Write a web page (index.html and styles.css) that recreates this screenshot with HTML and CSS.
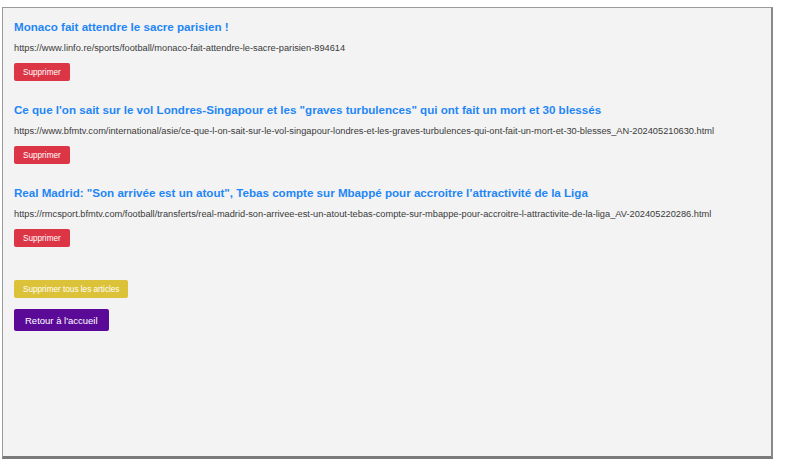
FILE: index.html
```html
<!DOCTYPE html>
<html lang="fr">
<head>
<meta charset="utf-8">
<title>Articles</title>
<link rel="stylesheet" href="styles.css">
</head>
<body>
<div class="frame">
  <div class="article">
    <h2 class="title">Monaco fait attendre le sacre parisien !</h2>
    <p class="url">https://www.linfo.re/sports/football/monaco-fait-attendre-le-sacre-parisien-894614</p>
    <button class="btn btn-red">Supprimer</button>
  </div>
  <div class="article">
    <h2 class="title">Ce que l'on sait sur le vol Londres-Singapour et les "graves turbulences" qui ont fait un mort et 30 blessés</h2>
    <p class="url">https://www.bfmtv.com/international/asie/ce-que-l-on-sait-sur-le-vol-singapour-londres-et-les-graves-turbulences-qui-ont-fait-un-mort-et-30-blesses_AN-202405210630.html</p>
    <button class="btn btn-red">Supprimer</button>
  </div>
  <div class="article">
    <h2 class="title">Real Madrid: "Son arrivée est un atout", Tebas compte sur Mbappé pour accroitre l’attractivité de la Liga</h2>
    <p class="url">https://rmcsport.bfmtv.com/football/transferts/real-madrid-son-arrivee-est-un-atout-tebas-compte-sur-mbappe-pour-accroitre-l-attractivite-de-la-liga_AV-202405220286.html</p>
    <button class="btn btn-red">Supprimer</button>
  </div>
  <div class="actions">
    <button class="btn btn-yellow">Supprimer tous les articles</button>
    <button class="btn btn-purple">Retour à l'accueil</button>
  </div>
</div>
</body>
</html>
```
FILE: styles.css
```css
html, body {
  margin: 0;
  padding: 0;
  background: #ffffff;
}
body {
  font-family: "Liberation Sans", Arial, sans-serif;
  padding: 7px 0 0 2px;
}
.frame {
  box-sizing: border-box;
  width: 771px;
  height: 452px;
  background: #f3f3f3;
  border: 1px solid #9a9a9a;
  border-right: 2px solid #8a8a8a;
  border-bottom: 3px solid #7a7a7a;
  padding: 11px 11px 0 11px;
  display: flex;
  flex-direction: column;
  align-items: flex-start;
}
.article {
  display: flex;
  flex-direction: column;
  align-items: flex-start;
  margin-bottom: 21px;
}
.title {
  margin: 0 0 7px 0;
  font-size: 11.6px;
  line-height: 16px;
  font-weight: bold;
  color: #1f86f6;
}
.url {
  margin: 0 0 9px 0;
  font-size: 9.25px;
  line-height: 12px;
  color: #3a3a3a;
}
.btn {
  border: none;
  border-radius: 2px;
  color: #ffffff;
  font-family: "Liberation Sans", Arial, sans-serif;
  cursor: pointer;
}
.btn-red {
  background: #dc3545;
  height: 18px;
  font-size: 8.2px;
  padding: 0 9px;
}
.actions {
  margin-top: 12px;
  display: flex;
  flex-direction: column;
  align-items: flex-start;
  gap: 11px;
}
.btn-yellow {
  background: #dcc238;
  height: 18px;
  font-size: 8.2px;
  padding: 0 9px;
}
.btn-purple {
  background: #5b0a98;
  height: 22px;
  font-size: 9.5px;
  padding: 0 11px;
}
```
